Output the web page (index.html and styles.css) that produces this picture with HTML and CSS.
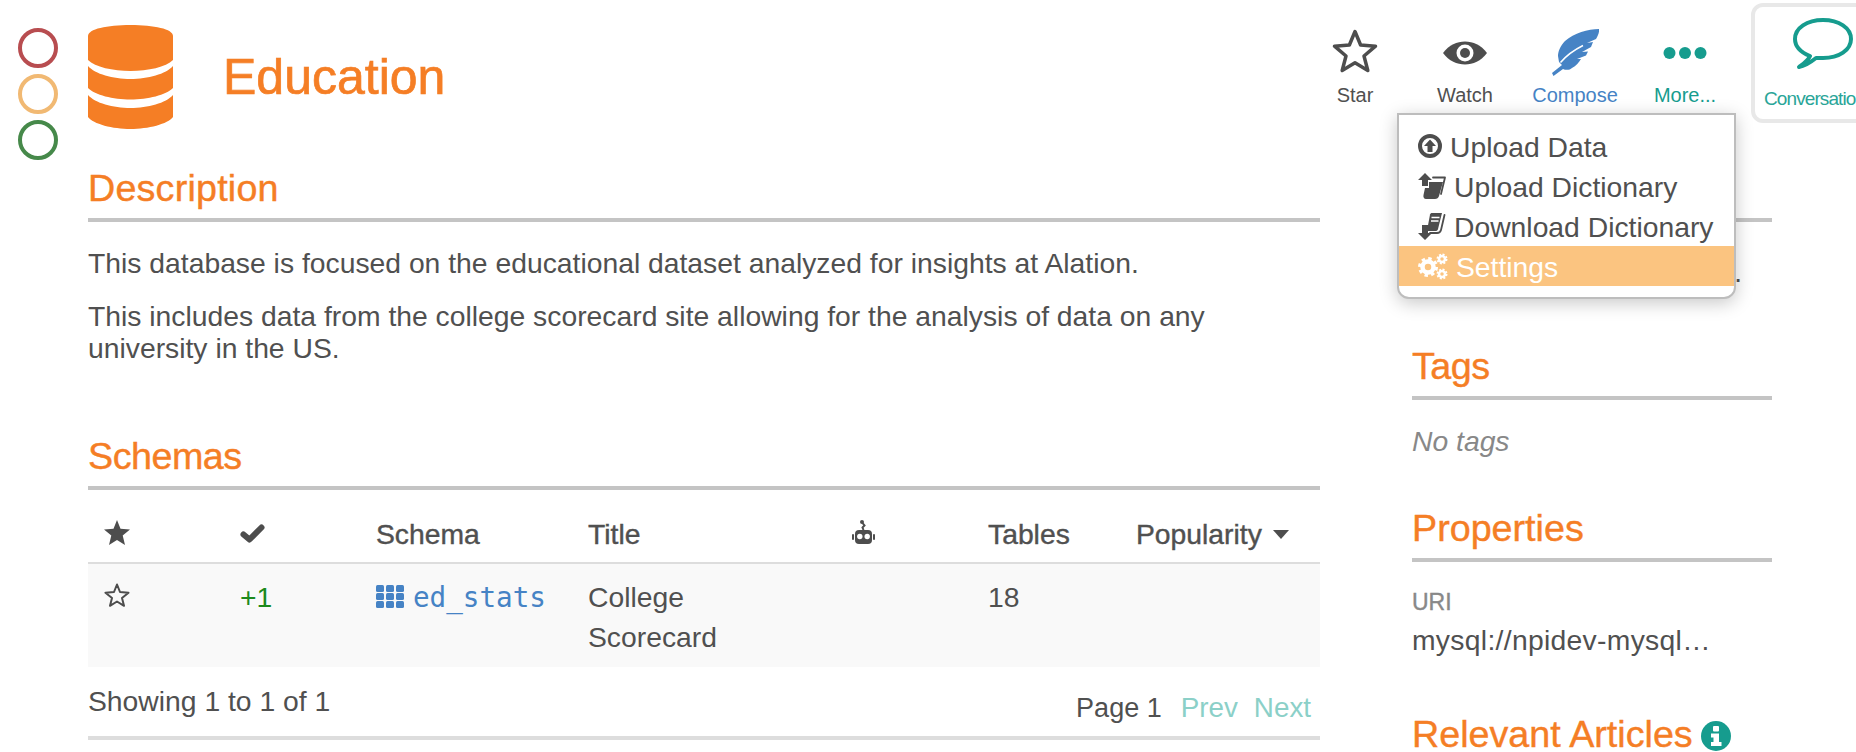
FILE: index.html
```
<!DOCTYPE html>
<html lang="en">
<head>
<meta charset="utf-8">
<title>Education</title>
<link rel="stylesheet" href="styles.css">
</head>
<body>
<div class="page">
  <div class="rail">
    <span class="dot dot-red"></span>
    <span class="dot dot-amber"></span>
    <span class="dot dot-green"></span>
  </div>
  <div class="content">
    <header class="header">
      <svg class="db-icon" viewBox="0 0 85 104" width="85" height="104"><path d="M0 11C0 4 19 0 42.5 0S85 4 85 11V35C78 42 60 46 42.5 46S7 42 0 35Z"/><path d="M0 41C7 49 25 54 42.5 54S78 49 85 41V63C78 70 60 74.500 42.500 74.500S7 70 0 63Z"/><path d="M0 70C7 78 25 83 42.500 83S78 78 85 70V92C80 99 60 104 42.500 104S5 99 0 92Z"/></svg>
      <h1 class="title">Education</h1>
      <div class="actions">
        <div class="action">
          <svg class="action-icon" viewBox="0 0 46 47" width="46" height="47"><polygon class="star-line" points="23,2.500 28.600,16 43.500,17.200 32,27 35.800,41.500 23,33.800 10.200,41.500 14,27 2.500,17.200 17.400,16"/></svg>
          <span class="action-label">Star</span>
        </div>
        <div class="action">
          <svg class="action-icon" viewBox="0 0 44 47" width="44" height="47"><path class="fill-dark" d="M0 24C6 16 14 12.500 22 12.500S38 16 44 24C38 32 30 35.500 22 35.500S6 32 0 24Z"/><circle class="fill-white" cx="22" cy="24" r="8.500"/><circle class="fill-dark" cx="22" cy="24" r="5"/></svg>
          <span class="action-label">Watch</span>
        </div>
        <div class="action action-blue">
          <svg class="action-icon" viewBox="0 0 47 47" width="47" height="47"><path class="fill-blue" d="M47 0C36 0 22 4 13 12C8 17 6 23 6 27L7 33L10 36L0 44L1.500 47L11 40C14 41.500 18 41 20 39C24 37 27 33 29 30L25 30L34 26.500L36 22.500L30 23L39 18L41 13L35 14L44 10C46 7 47.500 3 47 0Z"/><path class="quill" d="M8.500 33.500C14 27 22 21 31 16.500"/></svg>
          <span class="action-label">Compose</span>
        </div>
        <div class="action action-teal">
          <svg class="action-icon" viewBox="0 0 44 47" width="44" height="47"><circle class="fill-teal" cx="6.500" cy="24" r="6"/><circle class="fill-teal" cx="22" cy="24" r="6"/><circle class="fill-teal" cx="37.500" cy="24" r="6"/></svg>
          <span class="action-label">More...</span>
        </div>
        <div class="tab">
          <svg class="tab-icon" viewBox="0 0 60 51" width="60" height="51"><path d="M17 38C7 34 2 28 2 21C2 10 14 2 30 2S58 10 58 21S46 40 30 40C27 40 25 40 23 40C18 44 12 48 6 49C10 46 15 43 17 38Z"/></svg>
          <span class="tab-label">Conversations</span>
        </div>
        <nav class="menu">
          <div class="menu-item">
            <svg class="mi mi-upload" viewBox="0 0 24 24" width="24" height="24"><circle class="ring" cx="12" cy="12" r="10"/><path class="fill-dark" d="M12 5.500L18 12H14.500V18H9.500V12H6Z"/></svg>Upload Data
          </div>
          <div class="menu-item">
            <svg class="mi mi-dict" viewBox="0 0 28 26" width="28" height="26"><path class="fill-dark" d="M7 0L14 7H10V13H4V7H0Z"/><path class="page-edge" d="M15 4.500H27L23 21"/><path class="fill-dark" d="M11 9H25L21 23C20.500 25 19 26 17 26H8C6 26 5 24 5.500 22L7 15H11Z"/></svg>Upload Dictionary
          </div>
          <div class="menu-item">
            <svg class="mi mi-dict" viewBox="0 0 28 27" width="28" height="27"><path class="fill-dark" d="M12 1.500C12.500 .5 13 0 14 0H24L20 16C19.500 17.500 19 18 17 18H9Z"/><path class="page-line" d="M13.500 4.500H21.500M13 8H20.500"/><path class="page-edge" d="M26.500 2L23 17C22.500 19 21 20 19 20H12"/><path class="fill-dark" d="M4 12H10V20H14L7 27L0 20H4Z"/></svg>Download Dictionary
          </div>
          <div class="menu-item menu-item-active">
            <svg class="mi mi-cogs" viewBox="0 0 30 27" width="30" height="27"><circle class="cog-teeth" cx="10" cy="14" r="8.500"/><circle class="cog-ring" cx="10" cy="14" r="5.500"/><circle class="cog-teeth-sm" cx="24" cy="6" r="4.500"/><circle class="cog-ring-sm" cx="24" cy="6" r="3"/><circle class="cog-teeth-sm" cx="24" cy="21" r="4.500"/><circle class="cog-ring-sm" cx="24" cy="21" r="3"/></svg>Settings
          </div>
        </nav>
      </div>
    </header>
    <div class="columns">
      <main class="main">
        <h2 class="section-head head-description">Description</h2>
        <div class="desc">
          <p>This database is focused on the educational dataset analyzed for insights at Alation.</p>
          <p>This includes data from the college scorecard site allowing for the analysis of data on any university in the US.</p>
        </div>
        <h2 class="section-head section-schemas">Schemas</h2>
        <table class="grid">
          <colgroup>
            <col class="c-star"><col class="c-check"><col class="c-schema"><col class="c-title"><col class="c-bot"><col class="c-tables"><col class="c-pop">
          </colgroup>
          <thead>
            <tr>
              <th><svg class="th-star" viewBox="0 0 26 25" width="26" height="25"><polygon class="fill-dark" points="13,0 16.500,8.800 26,9.500 18.700,15.600 21,25 13,20 5,25 7.300,15.600 0,9.500 9.500,8.800"/></svg></th>
              <th><svg class="th-check" viewBox="0 0 25 19" width="25" height="19"><path class="check-line" d="M3.500 10.500L9.500 15.500L21.500 3.500"/></svg></th>
              <th>Schema</th>
              <th>Title</th>
              <th><svg class="th-bot" viewBox="0 0 23 24" width="23" height="24"><circle class="fill-dark" cx="10" cy="2" r="2"/><path class="bot-stem" d="M10.500 3L12.500 5.500L10.500 7.500L11.500 10"/><rect class="fill-dark" x="3" y="10" width="17" height="14" rx="4"/><rect class="fill-dark" x="0" y="14" width="2" height="6" rx="1"/><rect class="fill-dark" x="21" y="14" width="2" height="6" rx="1"/><circle class="fill-white" cx="7.800" cy="16.500" r="2.700"/><circle class="fill-white" cx="15.200" cy="16.500" r="2.700"/></svg></th>
              <th>Tables</th>
              <th>Popularity <span class="caret"></span></th>
            </tr>
          </thead>
          <tbody>
            <tr>
              <td><svg class="td-star" viewBox="0 0 26 24" width="26" height="24"><polygon class="star-thin" points="13,1.500 16,9 24.500,9.700 18,15 20,22.800 13,18.500 6,22.800 8,15 1.500,9.700 10,9"/></svg></td>
              <td class="vote">+1</td>
              <td><svg class="grid-icon" viewBox="0 0 28 23" width="28" height="23"><rect x="0" y="0" width="8" height="7" rx="1.500"/><rect x="10" y="0" width="8" height="7" rx="1.500"/><rect x="20" y="0" width="8" height="7" rx="1.500"/><rect x="0" y="8" width="8" height="7" rx="1.500"/><rect x="10" y="8" width="8" height="7" rx="1.500"/><rect x="20" y="8" width="8" height="7" rx="1.500"/><rect x="0" y="16" width="8" height="7" rx="1.500"/><rect x="10" y="16" width="8" height="7" rx="1.500"/><rect x="20" y="16" width="8" height="7" rx="1.500"/></svg><a class="schema-link">ed_stats</a></td>
              <td>College Scorecard</td>
              <td></td>
              <td>18</td>
              <td></td>
            </tr>
          </tbody>
        </table>
        <div class="table-foot">
          <span>Showing 1 to 1 of 1</span>
          <div class="pager">
            <span class="pager-page">Page 1</span>
            <span class="pager-link">Prev</span>
            <span class="pager-link">Next</span>
          </div>
        </div>
      </main>
      <aside class="side">
        <div class="section-head"></div>
        <div class="side-clipped">…</div>
        <h2 class="section-head side-tags">Tags</h2>
        <div class="no-tags">No tags</div>
        <h2 class="section-head side-props">Properties</h2>
        <div class="prop-name">URI</div>
        <div class="prop-value">mysql://npidev-mysql…</div>
        <h2 class="section-head side-articles">Relevant Articles<svg class="info-icon" viewBox="0 0 30 30" width="30" height="30"><circle class="fill-teal" cx="15" cy="15" r="15"/><rect class="fill-white" x="12" y="5" width="6" height="5.500" rx="1"/><path class="fill-white" d="M10 12.500H18V21H20.500V25H10V21H12.500V16.500H10Z"/></svg></h2>
      </aside>
    </div>
  </div>
</div>
</body>
</html>
```
FILE: styles.css
```
* { box-sizing: border-box; }
html, body { margin: 0; padding: 0; background: #fff; }
body {
  font-family: "Liberation Sans", Arial, sans-serif;
  font-size: 28.300px;
  line-height: 40px;
  color: #505050;
}
.page { display: flex; width: 1856px; height: 752px; overflow: hidden; }
.rail { flex: none; width: 88px; padding: 28px 0 0 18px; display: flex; flex-direction: column; gap: 6px; }
.dot { display: block; width: 40px; height: 40px; border-radius: 50%; border: 4px solid; }
.dot-red { border-color: #b84d50; }
.dot-amber { border-color: #f1b973; }
.dot-green { border-color: #46894a; }
.content { flex: none; width: 1768px; }

.header { display: flex; align-items: flex-start; height: 162px; }
.db-icon { flex: none; margin-top: 25px; fill: #f57e25; }
.title { margin: 47px 0 0 50px; font-size: 50px; line-height: 60px; font-weight: 400; color: #f57e25; -webkit-text-stroke: .7px #f57e25; }

.actions { position: relative; flex: none; display: flex; align-items: flex-start; margin: 3px 0 0 auto; width: 556px; }
.action { flex: none; width: 110px; padding-top: 26px; display: flex; flex-direction: column; align-items: center; }
.action-icon { display: block; }
.action-label { margin-top: 7px; font-size: 20px; line-height: 24px; white-space: nowrap; }
.action-blue { color: #4683c5; }
.action-teal { color: #169c8e; }
.tab {
  flex: none; width: 160px; height: 120px; margin-left: 11px; padding: 11px 0 0 9px;
  border: 4px solid #e8e8e8; border-radius: 12px; background: #fff;
  display: flex; flex-direction: column; align-items: flex-start;
}
.tab-icon { display: block; margin-left: 29px; }
.tab-icon path { fill: none; stroke: #169c8e; stroke-width: 4; stroke-linejoin: round; }
.tab-label { margin-top: 18px; font-size: 19px; line-height: 24px; letter-spacing: -.9px; color: #2aa598; white-space: nowrap; }

.fill-dark { fill: #4d4d4d; }
.fill-white { fill: #fff; }
.fill-blue { fill: #4683c5; }
.fill-teal { fill: #169c8e; }
.quill { fill: none; stroke: #fff; stroke-width: 1.500; }
.star-line { fill: none; stroke: #4d4d4d; stroke-width: 3.500; stroke-linejoin: round; }
.star-thin { fill: none; stroke: #4d4d4d; stroke-width: 2; stroke-linejoin: round; }
.check-line { fill: none; stroke: #4d4d4d; stroke-width: 6; stroke-linecap: round; stroke-linejoin: round; }
.bot-stem { fill: none; stroke: #4d4d4d; stroke-width: 2; }

.menu {
  position: absolute; left: 97px; top: 110px; z-index: 5; width: 339px; padding: 11px 0;
  background: #fff; border: 2px solid #bdbdbd; border-radius: 0 0 12px 12px;
  box-shadow: 0 4px 18px rgba(0, 0, 0, .22);
  line-height: 40px; white-space: nowrap;
}
.menu-item { display: flex; align-items: center; height: 40px; padding: 2px 0 0 19px; }
.mi { flex: none; margin: -2px 8px 0 0; }
.menu-item-active { background: #fbc480; color: #fff; }
.ring { fill: none; stroke: #4d4d4d; stroke-width: 4; }
.page-line { fill: none; stroke: #fff; stroke-width: 1.500; }
.page-edge { fill: none; stroke: #4d4d4d; stroke-width: 1.800; stroke-linecap: round; stroke-linejoin: round; }
.cog-teeth { fill: none; stroke: #fff; stroke-width: 3; stroke-dasharray: 3.400 3.270; }
.cog-ring { fill: none; stroke: #fff; stroke-width: 4.500; }
.cog-teeth-sm { fill: none; stroke: #fff; stroke-width: 2; stroke-dasharray: 2 1.530; }
.cog-ring-sm { fill: none; stroke: #fff; stroke-width: 2.500; }

.columns { display: flex; gap: 92px; }
.main { flex: none; width: 1232px; }
.side { flex: none; width: 360px; }
.section-head {
  margin: 0; height: 60px; padding: 1px 0 5px; border-bottom: 4px solid #c4c4c4;
  font-size: 37.700px; line-height: 50px; font-weight: 400; color: #f57e25; white-space: nowrap;
  -webkit-text-stroke: .4px #f57e25;
}
.head-description { letter-spacing: .2px; }
.desc { margin-top: 25px; line-height: 32px; }
.desc p { margin: 0 0 20.500px; }
.desc p:last-child { margin-bottom: 0; }
.section-schemas { margin-top: 66.500px; letter-spacing: -.5px; }

.grid { width: 1232px; table-layout: fixed; border-collapse: separate; border-spacing: 0; }
.c-star, .c-check { width: 136px; }
.c-schema { width: 212px; }
.c-title { width: 182px; }
.c-bot { width: 218px; }
.c-tables { width: 148px; }
.c-pop { width: 200px; }
.grid th {
  height: 74px; padding: 0 16px 8px; vertical-align: bottom; text-align: left; font-weight: 400;
  border-bottom: 2px solid #ddd; -webkit-text-stroke: .4px #505050; white-space: nowrap;
}
.grid td { height: 103px; padding: 13px 16px 10px; vertical-align: top; background: #f9f9f9; }
.th-star { display: block; margin-bottom: 9px; }
.th-check { display: block; margin-bottom: 11px; }
.th-bot { display: block; margin: 0 auto 10px; }
.td-star { display: block; margin-top: 6px; }
.caret { display: inline-block; margin-left: 3px; vertical-align: 5px; width: 0; height: 0; border-left: 8px solid transparent; border-right: 8px solid transparent; border-top: 9px solid #4d4d4d; }
.vote { color: #1c8a1c; }
.grid-icon { width: 28px; height: 23px; margin-right: 9px; vertical-align: -1px; fill: #4683c5; }
.schema-link { font-family: "DejaVu Sans Mono", "Liberation Mono", monospace; font-size: 27.600px; color: #4683c5; }

.table-foot { display: flex; justify-content: space-between; align-items: flex-start; height: 73px; padding-top: 14px; border-bottom: 4px solid #ddd; }
.pager { display: flex; padding: 7px 9px 0 0; font-size: 27px; }
.pager-page { margin-right: 19px; }
.pager-link { color: #8bd0c8; margin-right: 16px; font-size: 27.800px; }
.pager-link:last-child { margin-right: 0; }

.side-clipped { margin-top: 30px; padding-left: 303px; }
.side-tags { margin-top: 48px; letter-spacing: -.5px; }
.no-tags { margin-top: 21px; font-style: italic; color: #888; }
.side-props { margin-top: 41px; }
.prop-name { margin-top: 25px; font-size: 23px; line-height: 30px; color: #888; -webkit-text-stroke: .4px #888; }
.prop-value { margin-top: 3px; white-space: nowrap; letter-spacing: .3px; }
.side-articles { margin-top: 48px; }
.info-icon { vertical-align: -4px; margin-left: 8px; }
```
